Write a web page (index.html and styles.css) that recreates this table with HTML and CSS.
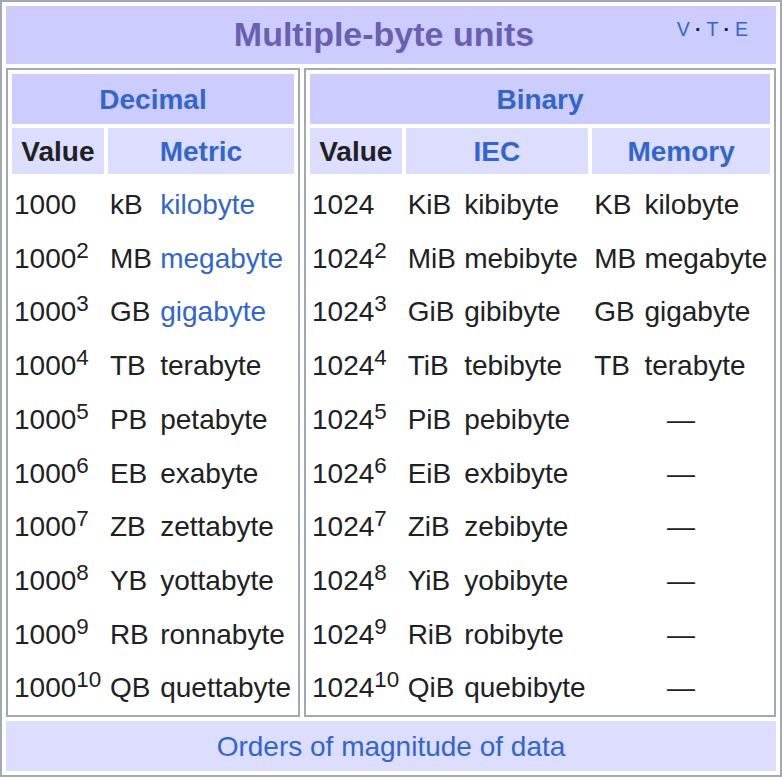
FILE: index.html
```html
<!DOCTYPE html>
<html lang="en">
<head>
<meta charset="utf-8">
<title>Multiple-byte units</title>
<link rel="stylesheet" href="styles.css">
</head>
<body>
<table class="navbox">
  <tr>
    <th class="title" colspan="2">
      <div class="title-bar">
        <span class="title-spacer"></span>
        <span class="title-text">Multiple-byte units</span>
        <ul class="navbar">
          <li>V</li>
          <li>T</li>
          <li>E</li>
        </ul>
      </div>
    </th>
  </tr>
  <tr>
    <td class="group group-left">
      <table class="units">
        <tr><th class="group-head" colspan="3">Decimal</th></tr>
        <tr><th class="sub">Value</th><th class="sub sub-link" colspan="2">Metric</th></tr>
        <tr><td>1000</td><td>kB</td><td class="link">kilobyte</td></tr>
        <tr><td>1000<sup>2</sup></td><td>MB</td><td class="link">megabyte</td></tr>
        <tr><td>1000<sup>3</sup></td><td>GB</td><td class="link">gigabyte</td></tr>
        <tr><td>1000<sup>4</sup></td><td>TB</td><td>terabyte</td></tr>
        <tr><td>1000<sup>5</sup></td><td>PB</td><td>petabyte</td></tr>
        <tr><td>1000<sup>6</sup></td><td>EB</td><td>exabyte</td></tr>
        <tr><td>1000<sup>7</sup></td><td>ZB</td><td>zettabyte</td></tr>
        <tr><td>1000<sup>8</sup></td><td>YB</td><td>yottabyte</td></tr>
        <tr><td>1000<sup>9</sup></td><td>RB</td><td>ronnabyte</td></tr>
        <tr><td>1000<sup>10</sup></td><td>QB</td><td>quettabyte</td></tr>
      </table>
    </td>
    <td class="group group-right">
      <table class="units">
        <tr><th class="group-head" colspan="5">Binary</th></tr>
        <tr><th class="sub">Value</th><th class="sub sub-link" colspan="2">IEC</th><th class="sub sub-link" colspan="2">Memory</th></tr>
        <tr><td>1024</td><td>KiB</td><td>kibibyte</td><td>KB</td><td>kilobyte</td></tr>
        <tr><td>1024<sup>2</sup></td><td>MiB</td><td>mebibyte</td><td>MB</td><td>megabyte</td></tr>
        <tr><td>1024<sup>3</sup></td><td>GiB</td><td>gibibyte</td><td>GB</td><td>gigabyte</td></tr>
        <tr><td>1024<sup>4</sup></td><td>TiB</td><td>tebibyte</td><td>TB</td><td>terabyte</td></tr>
        <tr><td>1024<sup>5</sup></td><td>PiB</td><td>pebibyte</td><td class="dash" colspan="2">—</td></tr>
        <tr><td>1024<sup>6</sup></td><td>EiB</td><td>exbibyte</td><td class="dash" colspan="2">—</td></tr>
        <tr><td>1024<sup>7</sup></td><td>ZiB</td><td>zebibyte</td><td class="dash" colspan="2">—</td></tr>
        <tr><td>1024<sup>8</sup></td><td>YiB</td><td>yobibyte</td><td class="dash" colspan="2">—</td></tr>
        <tr><td>1024<sup>9</sup></td><td>RiB</td><td>robibyte</td><td class="dash" colspan="2">—</td></tr>
        <tr><td>1024<sup>10</sup></td><td>QiB</td><td>quebibyte</td><td class="dash" colspan="2">—</td></tr>
      </table>
    </td>
  </tr>
  <tr>
    <td class="footer" colspan="2">Orders of magnitude of data</td>
  </tr>
</table>
</body>
</html>
```

FILE: styles.css
```css
html, body {
  margin: 0;
  padding: 0;
  background: #ffffff;
}

body {
  font-family: "Liberation Sans", Arial, sans-serif;
  color: #202122;
}

.navbox {
  width: 782px;
  border: 2px solid #a2a9b1;
  border-spacing: 4px;
  border-collapse: separate;
}

.title {
  background: #ccccff;
  height: 58px;
  padding: 0 14px 0 0;
}

.title-bar {
  display: grid;
  grid-template-columns: 1fr auto 1fr;
  height: 58px;
  align-items: center;
}

.title-text {
  font-size: 34px;
  font-weight: bold;
  color: #6a60b0;
  white-space: nowrap;
  padding-bottom: 1px;
}

.navbar {
  justify-self: end;
  align-self: start;
  margin: 12px 14px 0 0;
  padding: 0;
  list-style: none;
  display: flex;
  font-size: 19.6px;
  font-weight: normal;
  color: #3366cc;
  white-space: nowrap;
}

.navbar li + li::before {
  content: "\00b7";
  font-weight: bold;
  color: #202122;
  padding: 0 5px;
}

.group {
  padding: 0;
  vertical-align: top;
}

.group-left {
  width: 294px;
}

.units {
  width: 100%;
  border: 2px solid #a2a9b1;
  border-spacing: 4px;
  border-collapse: separate;
  font-size: 28px;
}

.group-head {
  background: #ccccff;
  color: #3366cc;
  font-weight: bold;
  padding: 3px 2px 1px;
  line-height: 46px;
}

.sub {
  background: #ddddff;
  color: #202122;
  font-weight: bold;
  padding: 3px 2px 1px;
  line-height: 42px;
}

.sub-link {
  color: #3366cc;
}

.units td {
  padding: 4px 2px 0;
  line-height: 45.7px;
  white-space: nowrap;
  text-align: left;
}

.units td.link {
  color: #3366cc;
}

.units td.dash {
  text-align: center;
}

sup {
  font-size: 80%;
  line-height: 0;
  vertical-align: super;
}

.footer {
  background: #ddddff;
  color: #3366cc;
  text-align: center;
  font-size: 28px;
  line-height: 46px;
  padding: 3px 2px 1px;
}
```
